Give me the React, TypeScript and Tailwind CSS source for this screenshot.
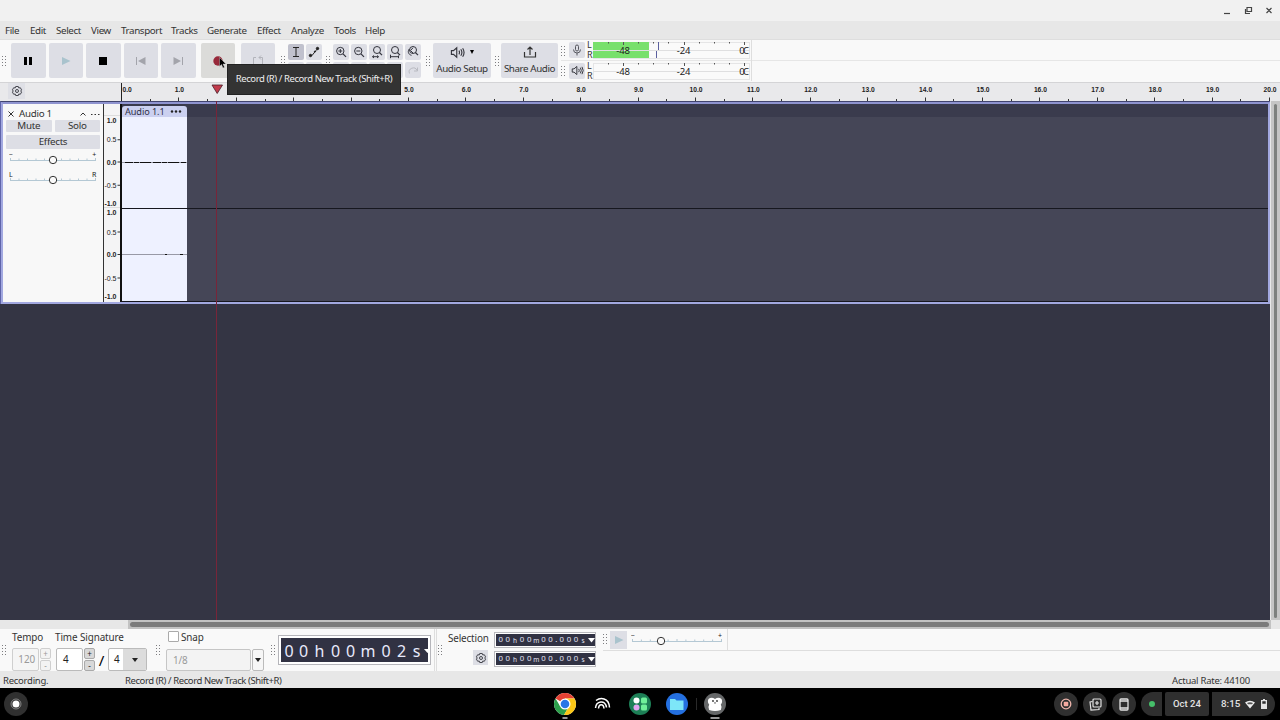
import type { ReactNode } from 'react'

const menus = [
  { label: 'File', width: 'w-[25px]' },
  { label: 'Edit', width: 'w-[26px]' },
  { label: 'Select', width: 'w-[35px]' },
  { label: 'View', width: 'w-[30px]' },
  { label: 'Transport', width: 'w-[50px]' },
  { label: 'Tracks', width: 'w-[36px]' },
  { label: 'Generate', width: 'w-[50px]' },
  { label: 'Effect', width: 'w-[34px]' },
  { label: 'Analyze', width: 'w-[43px]' },
  { label: 'Tools', width: 'w-[31px]' },
  { label: 'Help', width: 'w-[30px]' },
]

const Grip = ({ className = '' }: { className?: string }) => (
  <svg width="5" height="10" className={`shrink-0 ${className}`} fill="#7d7d80">
    {[0, 3, 6, 9].map((y) => (
      <g key={y}>
        <rect x="0" y={y} width="1" height="1" />
        <rect x="3" y={y} width="1" height="1" />
      </g>
    ))}
  </svg>
)

const BigButton = ({
  children,
  className = 'bg-[#dddee5]',
}: {
  children: ReactNode
  className?: string
}) => (
  <div
    className={`flex h-[35px] w-[34.5px] shrink-0 items-center justify-center rounded-[2px] ${className}`}
  >
    {children}
  </div>
)

const SmallButton = ({
  children,
  className = 'bg-[#dddee5]',
}: {
  children?: ReactNode
  className?: string
}) => (
  <div
    className={`flex h-4 w-4 shrink-0 items-center justify-center rounded-[2px] ${className}`}
  >
    {children}
  </div>
)

const Magnifier = ({ kind }: { kind: string }) => (
  <svg width="14" height="14" viewBox="0 0 14 14" fill="none" stroke="#33343d">
    {kind === 'in' || kind === 'out' ? (
      <>
        <circle cx="6.3" cy="6" r="3.7" />
        <path d="M9 8.8l3 3" strokeWidth="1.2" />
        <path d={kind === 'in' ? 'M4.3 6h4M6.3 4v4' : 'M4.3 6h4'} />
      </>
    ) : (
      <>
        <circle cx="7" cy="5" r="3.5" />
        <path d="M9.4 7.5l2.6 2.6" strokeWidth="1.2" />
        {kind === 'selection' && <path d="M2.5 11.7h6M4 10.5l-1.5 1.2L4 13M7 10.500l1.500 1.200L7 13" />}
        {kind === 'project' && <path d="M2.500 9.700v3.500M10.500 10.500v2.700M2.500 11.700h8" />}
        {kind === 'toggle' && <path d="M7 2.800L4.500 5.500 7 8M3.300 4C1.600 6 2 9.500 5.500 10.300" />}
      </>
    )}
  </svg>
)

const Gear = () => (
  <svg width="12" height="12" viewBox="0 0 12 12" fill="none" stroke="#45464e">
    <path d="M4.700 1.500h2.600l.5 1.500 1.500-.3 1.300 2.200L9.700 6l.9 1.100-1.300 2.200-1.500-.3-.5 1.500H4.700l-.5-1.500-1.500.3-1.300-2.200L2.300 6l-.9-1.100 1.300-2.200 1.500.3z" />
    <circle cx="6" cy="6" r="1.500" />
  </svg>
)

const Speaker = ({ size }: { size: number }) => (
  <svg
    width={size}
    height={size}
    viewBox="0 0 16 16"
    fill="none"
    stroke="#34353d"
    strokeWidth="1.2"
  >
    <path d="M1.5 6h2.2L7.2 3v10L3.7 10H1.5zM9.5 6q1.3 2 0 4M11.5 4.5q2.4 3.5 0 7M13.5 3.5q3 4.5 0 9" />
  </svg>
)

const Meter = ({ level }: { level?: boolean }) => (
  <div className="flex">
    <div className="-mt-[1.5px] w-[6px] text-[9px] leading-[9.5px] text-[#333]">
      <p>L</p>
      <p>R</p>
    </div>
    <svg width="158" height="18" className="font-['Noto_Sans',sans-serif]">
      <rect x=".5" y=".5" width="156" height="16" fill="#fafafa" stroke="#e5e5e6" />
      <path d="M0 8.5h157" stroke="#dfdfe0" />
      {level && (
        <>
          <path d="M0 0h56v8H0zM0 9h56v7H0z" fill="#78e06c" />
          <path d="M65.5 0v8M63.5 9v7" stroke="#5b5f9e" />
        </>
      )}
      {Array.from({ length: 10 }, (_, i) => (
        <rect
          key={i}
          x={Math.round(15 + i * 15.1)}
          y="0"
          width="1"
          height={i % 4 === 1 ? 3 : 1.5}
          fill="#555"
        />
      ))}
      <g fontSize="9.5" fill="#222" textAnchor="middle">
        <text x="30" y="11.5" letterSpacing="-.2">-48</text>
        <text x="90.5" y="11.5" letterSpacing="-.2">-24</text>
        <text x="149" y="11.5">0</text>
        <text x="153" y="11.5">C</text>
      </g>
    </svg>
  </div>
)

const Toolbars = () => (
  <div className="flex h-[43px] shrink-0 items-center border-t border-[#dedede] bg-[#f9f9f9] pb-px">
    <Grip className="ml-[2px]" />
    <div className="ml-[4px] flex gap-[3px]">
      <BigButton>
        <svg width="10" height="10">
          <path d="M1 1h3v8H1zM6 1h3v8H6z" />
        </svg>
      </BigButton>
      <BigButton>
        <svg width="10" height="10">
          <path d="M1 1l8.500 4L1 9z" fill="#a9c3cd" />
        </svg>
      </BigButton>
      <BigButton>
        <svg width="8" height="8">
          <path d="M0 0h8v8H0z" />
        </svg>
      </BigButton>
      <BigButton>
        <svg width="10" height="10" fill="#a3a4ab">
          <path d="M0 1h1v8H0zM9.500 1v8L2 5z" />
        </svg>
      </BigButton>
      <BigButton>
        <svg width="10" height="10" fill="#a3a4ab">
          <path d="M9 1h1v8H9zM.5 1v8L8 5z" />
        </svg>
      </BigButton>
    </div>
    <BigButton className="ml-[5px] bg-[#dbdbd9]">
      <svg width="10" height="10">
        <circle cx="5" cy="5" r="4.700" fill="#98293a" />
      </svg>
    </BigButton>
    <BigButton className="ml-[5.5px] bg-[#dddee5]">
      <svg width="12" height="12" fill="none" stroke="#b3b4bb">
        <path d="M4 2.500H1.500v8h9v-8H7M9 .5L7 2.500l2 2" />
      </svg>
    </BigButton>
    <Grip className="ml-[6px]" />
    <div className="ml-[2px] grid grid-cols-2 gap-x-[2px] gap-y-[2px]">
      <SmallButton className="bg-[#c0c1cd]">
        <svg width="10" height="12" fill="none" stroke="#222">
          <path d="M2 1.500h6M2 10.500h6M5 1.500v9" />
        </svg>
      </SmallButton>
      <SmallButton>
        <svg width="12" height="12" stroke="#222">
          <path d="M2 9.500h2l4-5 2-2" fill="none" />
          <circle cx="2.500" cy="9.500" r="1.200" fill="#222" />
          <circle cx="9.500" cy="2.500" r="1.200" fill="#222" />
          <circle cx="7" cy="5.500" r=".6" fill="#222" />
        </svg>
      </SmallButton>
      <SmallButton />
      <SmallButton />
    </div>
    <Grip className="ml-[4px]" />
    <div className="ml-[2px] grid grid-cols-5 gap-x-[2px] gap-y-[2px]">
      {['in', 'out', 'selection', 'project', 'toggle'].map((kind) => (
        <SmallButton key={kind}>
          <Magnifier kind={kind} />
        </SmallButton>
      ))}
      <SmallButton />
      <SmallButton />
      <SmallButton />
      <SmallButton />
      <SmallButton>
        <svg width="12" height="12" fill="none" stroke="#b9bac1">
          <path d="M2.500 9.500a4 4 0 1 1 7.500-3M10.500 3.500v3.500H7" />
        </svg>
      </SmallButton>
    </div>
    <Grip className="ml-[5px]" />
    <div className="ml-[2px] flex h-[35px] w-[58px] flex-col items-center rounded-[2px] bg-[#dddee5]">
      <div className="flex h-[18px] items-center gap-[5px]">
        <Speaker size={15} />
        <svg width="4" height="4">
          <path d="M0 0h4L2 4z" />
        </svg>
      </div>
      <span className="text-[9.8px] leading-4 tracking-[-0.4px] whitespace-nowrap">
        Audio Setup
      </span>
    </div>
    <Grip className="ml-[4px]" />
    <div className="ml-[1px] flex h-[35px] w-[57px] flex-col items-center rounded-[2px] bg-[#dddee5]">
      <div className="flex h-[18px] items-center">
        <svg width="14" height="14" fill="none" stroke="#333" strokeWidth="1.200">
          <path d="M1.500 7v5h11V7M7 10V2M4.500 4.500L7 2l2.500 2.500" />
        </svg>
      </div>
      <span className="text-[9.8px] leading-4 tracking-[-0.4px] whitespace-nowrap">
        Share Audio
      </span>
    </div>
    <div className="ml-[3px] flex h-full w-[191px] flex-col border-r border-[#dedede]">
      <div className="flex h-[21px] border-b border-[#e6e6e6] pt-[1.5px]">
        <Grip className="mt-[4px]" />
        <SmallButton className="mr-[2px] ml-[3px] bg-[#dddee5]">
          <svg width="12" height="12" fill="none" stroke="#55565e">
            <rect x="4.500" y="1" width="3" height="6" rx="1.500" />
            <path d="M2.500 5.500q0 3.500 3.500 3.500t3.500-3.500M6 9v2.500" />
          </svg>
        </SmallButton>
        <Meter level />
      </div>
      <div className="flex h-[21px] pt-[2px]">
        <Grip className="mt-[3px]" />
        <SmallButton className="mr-[2px] ml-[3px] bg-[#dddee5]">
          <Speaker size={13} />
        </SmallButton>
        <Meter />
      </div>
    </div>
    <div className="h-px flex-1 bg-[#e6e6e6]" />
  </div>
)

const Timeline = () => (
  <div className="flex h-[19px] shrink-0 border-t border-[#d4d4d6] bg-[#e9e9eb]">
    <div className="w-[121px] pl-2">
      <div className="flex h-[16px] w-[17px] items-center justify-center bg-[#dfe0e6]">
        <Gear />
      </div>
    </div>
    <svg width="1159" height="18" className="font-['Liberation_Sans',sans-serif]">
      <rect x="0" y="0" width="1" height="18" fill="#222" />
      {Array.from({ length: 40 }, (_, i) => {
        const x = Math.round((i + 1) * 28.7)
        return (
          <rect
            key={i}
            x={x}
            y={i % 2 ? 14.5 : 16}
            width="1"
            height={i % 2 ? 3.5 : 2}
            fill="#333"
          />
        )
      })}
      {Array.from({ length: 21 }, (_, i) => (
        <text
          key={i}
          x={i ? i * 57.4 + 1 : 1.5}
          y="9.2"
          fontSize="6.7"
          fontWeight="bold"
          fill="#222"
          textAnchor={i ? 'middle' : 'start'}
        >
          {i}.0
        </text>
      ))}
      <path d="M91 2h10.500L96.200 10.500z" fill="#c23b4c" stroke="#4a2028" strokeWidth=".8" />
    </svg>
  </div>
)

const Slider = ({
  left,
  right,
  value,
  width = 88,
}: {
  left: string
  right: string
  value: number
  width?: number
}) => (
  <svg width={width} height="17" className="block font-['Noto_Sans',sans-serif]">
    <text x="0" y="6.500" fontSize="7" fill="#222">{left}</text>
    <text x={width - 1} y="6.500" fontSize="7" fill="#222" textAnchor="end">{right}</text>
    <path d={`M1 10.500h${width - 2}`} stroke="#b4c8d4" />
    {Array.from({ length: 11 }, (_, i) => (
      <rect
        key={i}
        x={1 + (i * (width - 3)) / 10}
        y={i % 5 ? 8.5 : 8}
        width="1"
        height={i % 5 ? 1.5 : 3}
        fill="#b4c8d4"
      />
    ))}
    <circle cx={value} cy="10" r="3.700" fill="#fafafa" stroke="#333" />
  </svg>
)

const Channel = ({ top, height }: { top: number; height: number }) => (
  <g>
    {['1.0', '0.5', '0.0', '-0.5', '-1.0'].map((label, i) => {
      const y = top + [4, height * 0.25 + 0.5, height / 2, height * 0.75 + 0.5, height - 4][i]
      return (
        <g key={label}>
          <text
            x="13.500"
            y={y + 3}
            fontSize="7"
            fontWeight={i % 2 ? 'normal' : 'bold'}
            fill="#222"
            textAnchor="end"
          >
            {label}
          </text>
          {i > 0 && i < 4 && <rect x="14.500" y={y} width="2.500" height="1" fill="#333" />}
        </g>
      )
    })}
  </g>
)

const Track = () => (
  <div className="flex h-[203px] w-[1270px] shrink-0 border-t border-r border-l border-[#5f64a9] border-t-[#42456f]">
    <div className="flex flex-1 border-[2px] border-[#a2a8e0] border-t-[#8f94d0]">
      <div className="w-[100px] shrink-0 bg-[#f8f8f8] px-[3px] pt-[4px] text-[9.8px] tracking-[-0.3px] text-[#333]">
        <div className="flex h-[12px] items-center">
          <svg width="6" height="6" stroke="#333" className="ml-[2px]">
            <path d="M.5.5l5 5M5.500.5l-5 5" />
          </svg>
          <span className="ml-[5px] flex-1 leading-3">Audio 1</span>
          <svg width="20" height="6" fill="none" stroke="#333">
            <path d="M.5 4.500L3 2l2.500 2.500" />
            <path d="M11 3.500h1.500M14.500 3.500h1.500M18 3.500h1.500" />
          </svg>
        </div>
        <div className="flex gap-[3px] text-center leading-[12px]">
          <div className="h-[12px] flex-1 rounded-[1px] bg-[#dddee5]">Mute</div>
          <div className="h-[12px] flex-1 rounded-[1px] bg-[#dddee5]">Solo</div>
        </div>
        <div className="mt-[3px] h-[14px] rounded-[1px] bg-[#dddee5] text-center leading-[13px]">
          Effects
        </div>
        <div className="mt-px ml-[3px]">
          <Slider left="−" right="+" value={44} />
        </div>
        <div className="mt-[3px] ml-[3px]">
          <Slider left="L" right="R" value={44} />
        </div>
      </div>
      <svg
        width="19"
        height="198"
        className="shrink-0 bg-[#f4f4f5] font-['Liberation_Sans',sans-serif]"
      >
        <rect x="0" width="1" height="198" fill="#333" />
        <rect x="17" width="2" height="198" fill="#111" />
        <path d="M1 11.500h16M1 103.500h16" stroke="#ddd" />
        <Channel top={12} height={91} />
        <Channel top={104} height={92} />
      </svg>
      <div className="flex flex-1 flex-col bg-[#454657]">
        <div className="flex h-[13px] bg-[#3a3b4d] pt-[2px]">
          <div className="flex h-[11px] w-[65px] items-center rounded-t-[3px] bg-[#cbd0f0] pl-[3px] text-[9.2px] leading-[11px] tracking-[-0.1px] text-[#30324a]">
            <span className="flex-1 whitespace-nowrap">Audio 1.1</span>
            <svg width="12" height="3" className="mr-[5px]" fill="#222">
              <circle cx="2" cy="1.500" r="1.200" />
              <circle cx="6" cy="1.500" r="1.200" />
              <circle cx="10" cy="1.500" r="1.200" />
            </svg>
          </div>
        </div>
        <svg width="1146" height="185">
          <rect width="65" height="185" fill="#eef1ff" />
          <path d="M0 45.500h65M0 137.500h65" stroke="#9899a6" />
          <path d="M3 45.500h61" stroke="#111" strokeDasharray="8 1 5 1 11 2" />
          <path d="M43 137.500h2M58 137.500h3" stroke="#111" />
          <path d="M0 91.500h1146M0 184.500h1146" stroke="#16171f" />
        </svg>
      </div>
    </div>
  </div>
)

const clock = '00h00m02s'
const clockWidths = [
  'w-[14px]', 'w-[15px]', 'w-[17px]', 'w-[15px]', 'w-[15px]',
  'w-[20px]', 'w-[16px]', 'w-[15px]', 'w-[15px]',
]

const TimeField = () => (
  <div className="flex h-[16px] w-[102px] items-center border border-[#b9b9bd] bg-white p-px">
    <div className="flex h-full flex-1 items-center bg-[#313243] pl-px text-[7.8px] text-[#e4e5f5]">
      {'00h00m00.000s'.split('').map((char, i) => (
        <span
          key={i}
          className={
            char === '.'
              ? 'w-[4px] text-center'
              : /[a-z]/.test(char)
                ? 'w-[7.15px] pt-[2px] text-center text-[6.5px]'
                : 'w-[7.15px] text-center'
          }
        >
          {char}
        </span>
      ))}
      <svg width="7" height="5" className="ml-px shrink-0">
        <path d="M0 0h7L3.500 4.500z" fill="#fff" />
      </svg>
    </div>
  </div>
)

const Spinner = ({ disabled }: { disabled?: boolean }) => (
  <div className="ml-px flex flex-col gap-px">
    {['+', '-'].map((sign) => (
      <div
        key={sign}
        className={`flex h-[11px] w-[11px] items-center justify-center rounded-[2px] border text-[8px] ${
          disabled
            ? 'border-[#cfcfcf] bg-[#f3f3f3] text-[#999]'
            : 'border-[#aaa] bg-[#d8d8d8] text-[#222]'
        }`}
      >
        {sign}
      </div>
    ))}
  </div>
)

const Arrow = () => (
  <svg width="6" height="4">
    <path d="M0 0h6L3 4z" fill="#222" />
  </svg>
)

const BottomBar = () => (
  <div className="flex h-[42px] shrink-0 bg-[#f9f9f9] text-[9.9px] tracking-[-0.1px] text-[#333]">
    <Grip className="mt-[16px] ml-[2px]" />
    <div className="ml-[5px] w-[43px]">
      <p className="h-[18px] leading-[16px]">Tempo</p>
      <div className="flex pt-px">
        <div className="flex h-[23px] w-[27px] items-center justify-end rounded-[2px] border border-[#cfcfcf] bg-[#f5f5f5] pr-[3px] text-[#999]">
          120
        </div>
        <Spinner disabled />
      </div>
    </div>
    <div className="w-[98px]">
      <p className="h-[18px] leading-[16px] whitespace-nowrap">Time Signature</p>
      <div className="flex items-center pt-px">
        <div className="ml-px flex h-[23px] w-[27px] items-center rounded-[2px] border border-[#bbb] bg-white pl-[6px] text-[#222]">
          4
        </div>
        <Spinner />
        <span className="w-[13px] text-center text-[15px] leading-4 text-black">/</span>
        <div className="flex h-[23px] w-[39px] overflow-hidden rounded-[2px] border border-[#bbb] bg-white">
          <span className="w-[14px] pl-[5px] leading-[21px] text-[#222]">4</span>
          <span className="flex flex-1 items-center justify-center bg-[#dcdcdc]">
            <Arrow />
          </span>
        </div>
      </div>
    </div>
    <Grip className="mt-[16px] ml-[3px]" />
    <div className="ml-[5px] w-[100px] pt-px">
      <div className="ml-[2px] flex h-[13px] items-center">
        <span className="h-[11px] w-[11px] rounded-[1px] border border-[#aaa] bg-white" />
        <span className="ml-[2px] leading-3">Snap</span>
      </div>
      <div className="mt-[6px] flex gap-[1.5px]">
        <div className="h-[22px] w-[84.5px] rounded-[2px] border border-[#c6c6c6] bg-[#f3f3f3] pl-[6px] leading-[21px] text-[#999]">
          1/8
        </div>
        <div className="flex h-[22px] w-[12px] items-center justify-center rounded-[2px] border border-[#bbb] bg-[#f6f6f6]">
          <Arrow />
        </div>
      </div>
    </div>
    <Grip className="mt-[16px] ml-[5px]" />
    <div className="mt-[6px] ml-[2px] flex h-[30px] w-[153px] border border-[#b5b5ba] bg-white p-[2px]">
      <div className="flex flex-1 items-center overflow-hidden bg-[#313243] pt-px pl-px text-[16px] tracking-normal text-[#e9eafc]">
        {clock.split('').map((char, i) => (
          <span key={i} className={`shrink-0 text-center ${clockWidths[i]}`}>
            {char}
          </span>
        ))}
        <svg width="7" height="4" className="shrink-0">
          <path d="M0 0h7L3.500 4z" fill="#fff" />
        </svg>
      </div>
    </div>
    <div className="ml-[3px] w-[3px] border-r border-l border-[#dedede]" />
    <Grip className="mt-[16px] ml-[1px]" />
    <div className="ml-[5px] w-[46px] pt-[3px]">
      <p className="h-[16px] leading-[13px] tracking-[-0.15px]">Selection</p>
      <div className="mt-[2px] ml-[25px] flex h-[15px] w-[15px] items-center justify-center bg-[#dddee5]">
        <Gear />
      </div>
    </div>
    <div className="flex flex-col gap-[3px] pt-[3px]">
      <TimeField />
      <TimeField />
    </div>
    <div className="ml-[7px] flex h-[22px] w-[125px] border-r border-b border-[#dedede]">
      <Grip className="mt-[5px]" />
      <div className="mt-[2px] ml-[2px] flex h-[18px] w-[17px] items-center justify-center bg-[#dddee5]">
        <svg width="10" height="10">
          <path d="M1 1l8.500 4L1 9z" fill="#a9c3cd" />
        </svg>
      </div>
      <div className="mt-[2px] ml-[4px]">
        <Slider left="−" right="+" value={30} width={92} />
      </div>
    </div>
    <div className="mt-[21px] h-px flex-1 bg-[#dedede]" />
  </div>
)

const Shelf = () => (
  <div className="flex h-8 shrink-0 items-center bg-black">
    <div className="ml-[4px] flex h-6 w-6 items-center justify-center rounded-full bg-[#303030]">
      <svg width="12" height="12">
        <circle cx="6" cy="6" r="5" fill="none" stroke="#999" strokeWidth=".8" />
        <circle cx="6" cy="6" r="3.500" fill="#fff" />
      </svg>
    </div>
    <svg width="180" height="32" className="ml-[522px]">
      <g>
        <circle cx="15" cy="16" r="11" fill="#fff" />
        <path d="M15 16L5.500 10.500A11 11 0 0 1 24.500 10.500H15z" fill="#e34133" />
        <path d="M5.500 10.500A11 11 0 0 0 14 27l5-8.500-9-.500z" fill="#2c9f4b" />
        <path d="M24.500 10.500A11 11 0 0 1 14 27l5.500-9.500-4.500-7z" fill="#fbc716" />
        <circle cx="15" cy="16" r="5.500" fill="#fff" />
        <circle cx="15" cy="16" r="4.300" fill="#2b75e6" />
      </g>
      <path
        d="M46 12.500C50 9.500 59 9 59.500 19.500M45.500 20C46 13 55.500 11 56.500 19.500M48.500 20.500C49 15.500 53.500 15.500 54 20.500"
        fill="none"
        stroke="#fff"
        strokeWidth="1.500"
      />
      <circle cx="90" cy="16" r="11" fill="#1d7f56" />
      <circle cx="86.500" cy="12.500" r="3" fill="#fff" />
      <rect x="91" y="9.500" width="6" height="6" rx="1.500" fill="#6ff09a" />
      <circle cx="86.500" cy="19.500" r="3" fill="#e2a6ef" />
      <rect x="91" y="16.500" width="6" height="6" rx="1.500" fill="#6ff09a" />
      <circle cx="127" cy="16" r="11" fill="#2470e0" />
      <path d="M120 11h5l1.500 1.500h7v9.500H120z" fill="#7de6f8" />
      <path d="M146.500 10v12" stroke="#292929" />
      <circle cx="165" cy="16" r="11" fill="#666869" />
      <path
        d="M158.500 11q3-2.500 6.500 0 3.500-2.500 6.500 0 1.500 3-.7 5.500 1.700 3 0 5.500-5.800 2-11.600 0-1.700-2.500 0-5.500-2.200-2.500-.7-5.500z"
        fill="#fff"
      />
      <circle cx="163" cy="13" r=".9" fill="#333" />
      <circle cx="167" cy="13" r=".9" fill="#333" />
      <path d="M164 14.500h2l-1 1.500z" fill="#333" />
      <path d="M12.500 30h5M160.500 30h9" stroke="#c9c9c9" strokeWidth="1.500" />
    </svg>
    <div className="ml-auto flex items-center text-[#e3e3e3]">
      <div className="mr-[5px] flex h-6 w-6 items-center justify-center rounded-full bg-[#2f2f2f]">
        <svg width="12" height="12">
          <circle cx="6" cy="6" r="4.800" fill="none" stroke="#eeb5ac" strokeWidth="1.300" />
          <rect x="3.700" y="3.700" width="4.600" height="4.600" rx="1" fill="#f6aaa0" />
        </svg>
      </div>
      <div className="mr-[5px] flex h-6 w-6 items-center justify-center rounded-full bg-[#2f2f2f]">
        <svg width="13" height="13" fill="none" stroke="#e3e3e3" strokeWidth="1.200">
          <rect x="4" y="1" width="8" height="8" rx="1" />
          <path d="M8 3v4M6 5h4M3.500 3.500L1 4l1 8 8-.5V10" />
        </svg>
      </div>
      <div className="mr-[5px] flex h-6 w-6 items-center justify-center rounded-full bg-[#2f2f2f]">
        <svg width="10" height="13" fill="none" stroke="#e3e3e3" strokeWidth="1.300">
          <rect x="1" y="1" width="8" height="11" rx="1" />
          <path d="M1 3h8M1 10h8" />
        </svg>
      </div>
      <div className="mr-[3px] flex h-6 w-[21px] items-center justify-center rounded-l-full rounded-r-[2px] bg-[#2f2f2f]">
        <span className="h-[6px] w-[6px] rounded-full bg-[#46bf6a]" />
      </div>
      <div className="mr-[3px] flex h-6 w-[44px] items-center justify-center rounded-[2px] bg-[#2f2f2f] font-['Roboto',sans-serif] text-[9.5px] font-medium">
        Oct 24
      </div>
      <div className="mr-[5px] flex h-6 w-[63px] items-center rounded-l-[2px] rounded-r-full bg-[#2f2f2f] pl-[9px] font-['Roboto',sans-serif] text-[9.8px] font-medium">
        <span className="w-[24px]">8:15</span>
        <svg width="10" height="9">
          <path d="M0 2.500q5-3.500 10 0L5 8.500z" fill="#eee" />
          <path d="M2 3q3-1.500 6 0L7 4.300H3z" fill="#555" />
        </svg>
        <svg width="6" height="10" className="ml-[6px]" fill="#e3e3e3">
          <path d="M2 0h2v1h2v9H0V1h2zM1.300 2.300v2.500h3.400V2.300z" fillRule="evenodd" />
        </svg>
      </div>
    </div>
  </div>
)

const App = () => {
  return (
    <div className="relative flex h-[720px] w-[1280px] flex-col overflow-hidden bg-[#343544] font-['Noto_Sans',sans-serif] text-[#333]">
      <div className="flex h-[21px] shrink-0 justify-end bg-[#f1f1f1]">
        <svg width="60" height="21" fill="none" stroke="#444" strokeWidth="1.200">
          <path d="M4 13.500h6" />
          <path d="M27 7.500h4.500v4H27zM25.500 9v4.500H30M46.500 8l5 5M51.500 8l-5 5" />
        </svg>
      </div>
      <div className="flex h-[18px] shrink-0 bg-[#e7e7e7] pl-[5px] text-[9.8px] leading-[19px] tracking-[-0.38px]">
        {menus.map((menu) => (
          <span key={menu.label} className={`whitespace-nowrap ${menu.width}`}>
            {menu.label}
          </span>
        ))}
      </div>
      <Toolbars />
      <Timeline />
      <div className="flex h-[519px] shrink-0">
        <div className="w-[1270px]">
          <Track />
        </div>
        <div className="flex-1 border-l border-[#e8e8e8] bg-[#c5c5c5] px-[3px] pt-[3px] pb-[2px]">
          <div className="h-full rounded-full bg-[#7d807e]" />
        </div>
      </div>
      <div className="flex h-[9px] shrink-0 bg-[#e7e7e7]">
        <div className="ml-[128px] w-[1143px] bg-[#c2c2c2] px-[2px] pt-[2px]">
          <div className="h-[5px] rounded-full bg-[#7b7b7b]" />
        </div>
      </div>
      <BottomBar />
      <div className="flex h-[17px] shrink-0 bg-[#e7e7e7] text-[9.5px] leading-[20px] tracking-[-0.25px] text-[#333]">
        <span className="w-[125px] pl-[3px]">Recording.</span>
        <span className="flex-1 tracking-[-0.42px]">Record (R) / Record New Track (Shift+R)</span>
        <span className="pr-[30px]">Actual Rate: 44100</span>
      </div>
      <Shelf />
      {/* playhead line */}
      <div className="absolute top-[101px] left-[216px] h-[519px] w-px bg-[#782539]" />
      {/* tooltip and pointer */}
      <div className="absolute top-[64px] left-[227px] flex h-[31px] w-[174px] items-center justify-center border border-[#222] bg-[#333] pb-px text-[9.5px] tracking-[-0.42px] whitespace-nowrap text-[#eee]">
        Record (R) / Record New Track (Shift+R)
      </div>
      <svg width="8" height="12" className="absolute top-[57px] left-[219px]">
        <path d="M.5.5v9l2-2L4 11l1.500-.700L4 7h3z" stroke="#ddd" strokeWidth=".4" />
      </svg>
    </div>
  )
}

export default App
